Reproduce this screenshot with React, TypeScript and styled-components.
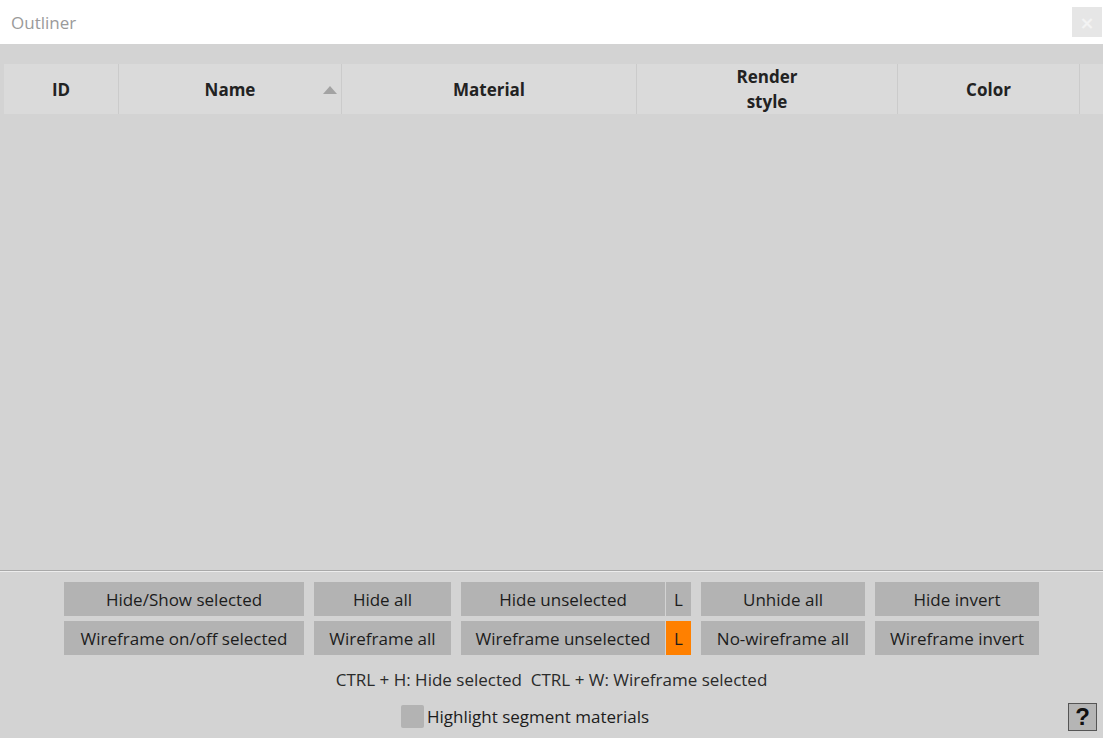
import React from "react";
import styled, { createGlobalStyle } from "styled-components";

const Global = createGlobalStyle`
  html, body { margin: 0; padding: 0; }
  body { font-family: "Open Sans", "Noto Sans", sans-serif; background: #d3d3d3; }
  #root { width: 1103px; height: 738px; overflow: hidden; }
  * { box-sizing: border-box; }
`;

const Window = styled.div`
  display: flex;
  flex-direction: column;
  width: 1103px;
  height: 738px;
  background: #d3d3d3;
`;

const TitleBar = styled.div`
  height: 44px;
  flex: none;
  background: #ffffff;
  display: flex;
  align-items: center;
  justify-content: space-between;
  padding: 0 1px 0 11px;
`;

const Title = styled.span`
  font-size: 17px;
  color: #9a9a9a;
`;

const CloseButton = styled.div`
  width: 30px;
  height: 30px;
  background: #e6e6e6;
  color: #f3f3f3;
  font-size: 18px;
  font-weight: bold;
  display: flex;
  align-items: center;
  justify-content: center;
  font-family: "DejaVu Sans", sans-serif;
`;

const TableArea = styled.div`
  flex: 1;
  padding: 20px 0 0 4px;
  overflow: hidden;
`;

const HeaderRow = styled.div`
  display: flex;
  height: 50px;
  background: #dadada;
`;

const HeaderCell = styled.div<{ $w: number; $last?: boolean }>`
  position: relative;
  width: ${(p) => p.$w}px;
  flex: none;
  display: flex;
  align-items: center;
  justify-content: center;
  text-align: center;
  font-weight: 700;
  font-size: 17px;
  line-height: 25px;
  color: #222;
  white-space: pre;
  border-right: ${(p) => (p.$last ? "none" : "1px solid #cbcbcb")};
`;

const SortArrow = styled.svg`
  position: absolute;
  right: 4px;
  top: 22px;
`;

const Footer = styled.div`
  flex: none;
  border-top: 1px solid #a9a9a9;
  box-shadow: inset 0 1px 0 #ececec;
  padding: 11px 0 7px 0;
  display: flex;
  flex-direction: column;
`;

const ButtonGrid = styled.div`
  display: flex;
  flex-direction: column;
  align-items: center;
  gap: 5px;
`;

const ButtonRow = styled.div`
  display: flex;
  gap: 10px;
`;

const Btn = styled.div<{ $w: number }>`
  width: ${(p) => p.$w}px;
  height: 34px;
  background: #b3b3b3;
  color: #1c1c1c;
  font-size: 17px;
  display: flex;
  align-items: center;
  justify-content: center;
  white-space: nowrap;
`;

const Pair = styled.div`
  display: flex;
  gap: 1px;
`;

const LockBtn = styled.div<{ $on?: boolean }>`
  width: 25px;
  height: 34px;
  background: ${(p) => (p.$on ? "#ff8000" : "#b3b3b3")};
  color: #1c1c1c;
  font-size: 17px;
  display: flex;
  align-items: center;
  justify-content: center;
`;

const Shortcuts = styled.div`
  margin-top: 11px;
  height: 28px;
  text-align: center;
  font-size: 17px;
  color: #2a2a2a;
  white-space: pre;
  line-height: 28px;
`;

const BottomRow = styled.div`
  display: flex;
  align-items: center;
  height: 29px;
  margin-top: 8px;
  padding: 0 6px 0 401px;
`;

const CheckBox = styled.div`
  width: 23px;
  height: 23px;
  border-radius: 2px;
  background: #b3b3b3;
  flex: none;
`;

const CheckLabel = styled.span`
  margin-left: 3px;
  font-size: 17px;
  color: #1c1c1c;
  flex: 1;
`;

const HelpButton = styled.div`
  width: 29px;
  height: 28px;
  border: 1px solid #555;
  background: #b5b5b5;
  color: #111;
  font-family: "Liberation Sans", "DejaVu Sans", sans-serif;
  font-weight: bold;
  font-size: 24px;
  display: flex;
  align-items: center;
  justify-content: center;
`;

const columns = [
  { label: "ID", w: 115 },
  { label: "Name", w: 223, sort: true },
  { label: "Material", w: 295 },
  { label: "Render\nstyle", w: 261 },
  { label: "Color", w: 182 },
  { label: "", w: 30, last: true },
];

export default function App() {
  return (
    <>
      <Global />
      <Window>
        <TitleBar>
          <Title>Outliner</Title>
          <CloseButton>×</CloseButton>
        </TitleBar>
        <TableArea>
          <HeaderRow>
            {columns.map((c, i) => (
              <HeaderCell key={i} $w={c.w} $last={c.last}>
                {c.label}
                {c.sort && (
                  <SortArrow width="14" height="8" viewBox="0 0 14 8">
                    <polygon points="7,0 14,8 0,8" fill="#a3a3a3" />
                  </SortArrow>
                )}
              </HeaderCell>
            ))}
          </HeaderRow>
        </TableArea>
        <Footer>
          <ButtonGrid>
            <ButtonRow>
              <Btn $w={240}>Hide/Show selected</Btn>
              <Btn $w={137}>Hide all</Btn>
              <Pair>
                <Btn $w={204}>Hide unselected</Btn>
                <LockBtn>L</LockBtn>
              </Pair>
              <Btn $w={164}>Unhide all</Btn>
              <Btn $w={164}>Hide invert</Btn>
            </ButtonRow>
            <ButtonRow>
              <Btn $w={240}>Wireframe on/off selected</Btn>
              <Btn $w={137}>Wireframe all</Btn>
              <Pair>
                <Btn $w={204}>Wireframe unselected</Btn>
                <LockBtn $on>L</LockBtn>
              </Pair>
              <Btn $w={164}>No-wireframe all</Btn>
              <Btn $w={164}>Wireframe invert</Btn>
            </ButtonRow>
          </ButtonGrid>
          <Shortcuts>{"CTRL + H: Hide selected  CTRL + W: Wireframe selected"}</Shortcuts>
          <BottomRow>
            <CheckBox />
            <CheckLabel>Highlight segment materials</CheckLabel>
            <HelpButton>?</HelpButton>
          </BottomRow>
        </Footer>
      </Window>
    </>
  );
}
